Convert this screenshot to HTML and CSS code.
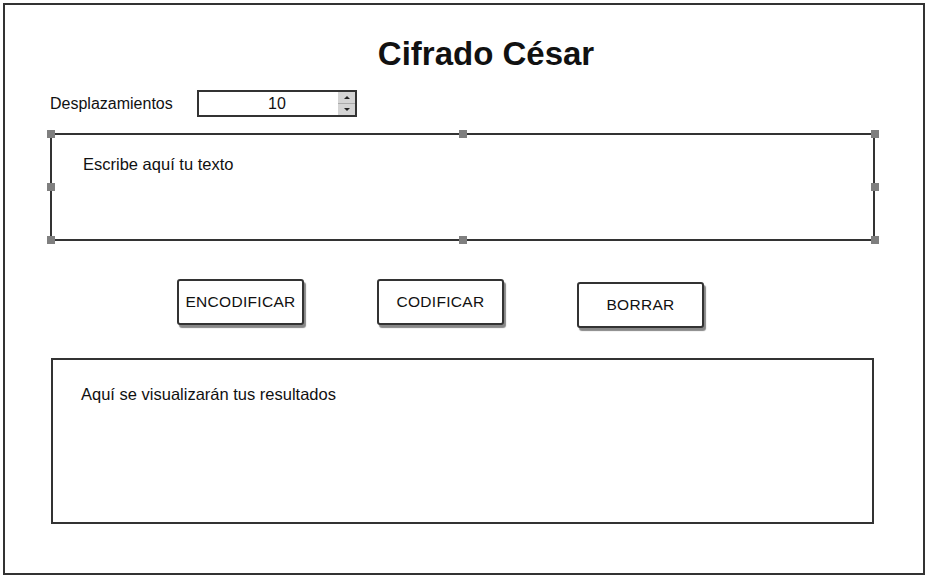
FILE: index.html
```html
<!DOCTYPE html>
<html lang="es">
<head>
  <meta charset="UTF-8" />
  <title>Cifrado César</title>
  <link rel="stylesheet" href="styles.css">
</head>
<body>
  <div class="frame">
    <h1 class="title">Cifrado César</h1>

    <div class="controls">
      <label class="label">Desplazamientos</label>
      <div class="stepper">
        <span class="stepper-value">10</span>
        <div class="stepper-arrows">
          <span class="arrow up"></span>
          <span class="arrow down"></span>
        </div>
      </div>
    </div>

    <div class="input-box">
      <div class="input-text">Escribe aquí tu texto</div>
      <!-- selection handles -->
      <span class="handle h-tl"></span>
      <span class="handle h-tc"></span>
      <span class="handle h-tr"></span>
      <span class="handle h-ml"></span>
      <span class="handle h-mr"></span>
      <span class="handle h-bl"></span>
      <span class="handle h-bc"></span>
      <span class="handle h-br"></span>
    </div>

    <div class="actions">
      <button class="btn">ENCODIFICAR</button>
      <button class="btn">CODIFICAR</button>
      <button class="btn btn-low">BORRAR</button>
    </div>

    <div class="output-box">
      <div class="output-text">Aquí se visualizarán tus resultados</div>
    </div>
  </div>
</body>
</html>
```

FILE: styles.css
```css
body {
  margin: 0;
  background: #fff;
  font-family: 'Comic Sans MS', 'Liberation Sans', sans-serif;
  color: #111;
}

.frame {
  box-sizing: border-box;
  width: 922px;
  height: 572px;
  margin: 3px;
  border: 2px solid #333;
}

.title {
  margin: 29px 0 0 44px;
  height: 40px;
  line-height: 40px;
  text-align: center;
  font-size: 33px;
  font-weight: bold;
  color: #111;
}

.controls {
  display: flex;
  align-items: center;
  margin: 16px 0 0 45px;
  height: 27px;
}

.label {
  width: 147px;
  font-size: 16px;
}

.stepper {
  box-sizing: border-box;
  display: flex;
  width: 160px;
  height: 27px;
  border: 2px solid #333;
}

.stepper-value {
  flex: 1;
  padding-left: 17px;
  text-align: center;
  line-height: 23px;
  font-size: 16px;
}

.stepper-arrows {
  width: 17px;
  display: flex;
  flex-direction: column;
  background: #d4d4d4;
}

.arrow {
  flex: 1;
  display: flex;
  align-items: center;
  justify-content: center;
}

.arrow.up {
  border-bottom: 1px solid #aaa;
}

.arrow::before {
  content: '';
  border-left: 3px solid transparent;
  border-right: 3px solid transparent;
}

.arrow.up::before {
  border-bottom: 3px solid #222;
}

.arrow.down::before {
  border-top: 3px solid #222;
}

.input-box {
  position: relative;
  box-sizing: border-box;
  width: 825px;
  height: 108px;
  margin: 16px 0 0 45px;
  border: 2px solid #333;
}

.input-text {
  padding: 20px 0 0 31px;
  font-size: 16.5px;
}

.handle {
  position: absolute;
  width: 8px;
  height: 8px;
  background: #7f7f7f;
}

.h-tl { left: -5px; top: -5px; }
.h-tc { left: 407px; top: -5px; }
.h-tr { right: -6px; top: -5px; }
.h-ml { left: -5px; top: 48px; }
.h-mr { right: -6px; top: 48px; }
.h-bl { left: -5px; bottom: -5px; }
.h-bc { left: 407px; bottom: -5px; }
.h-br { right: -6px; bottom: -5px; }

.actions {
  display: flex;
  align-items: flex-start;
  gap: 73px;
  margin: 38px 0 0 172px;
  height: 46px;
}

.btn {
  box-sizing: border-box;
  width: 127px;
  height: 46px;
  padding: 0;
  border: 2px solid #333;
  border-radius: 3px;
  background: #fff;
  box-shadow: 2px 3px 1px #888;
  font-family: inherit;
  font-size: 15.5px;
  letter-spacing: 0.3px;
  color: #111;
}

.btn-low {
  margin-top: 3px;
}

.output-box {
  box-sizing: border-box;
  width: 823px;
  height: 166px;
  margin: 33px 0 0 46px;
  border: 2px solid #333;
}

.output-text {
  padding: 25px 0 0 28px;
  font-size: 16.5px;
}
```
